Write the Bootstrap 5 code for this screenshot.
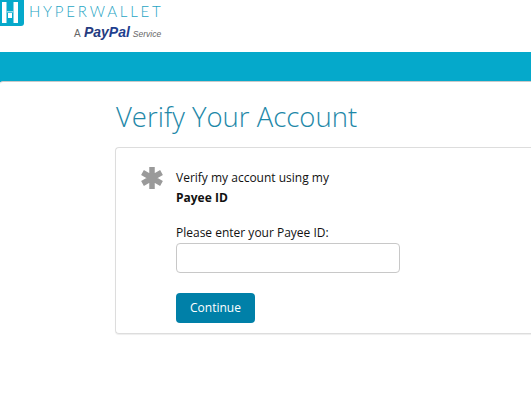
<!DOCTYPE html>
<html lang="en"><head><meta charset="utf-8"><title>Verify Your Account</title>
<link href="https://cdn.jsdelivr.net/npm/bootstrap@5.3.0/dist/css/bootstrap.min.css" rel="stylesheet">
<style>
html,body{height:414px;overflow:hidden}
body{font-family:"Open Sans",sans-serif;font-size:12px;color:#111;background:#fff}
.hw-head{height:52px}
.hw-mark{width:24px;height:26px;background:#05a9cb;border-radius:0 0 3px 0}
.hw-word{font-family:Lato,sans-serif;font-weight:300;font-size:15px;letter-spacing:2.800px;color:#1fa5c4;line-height:18px;margin-top:2px;margin-left:5px}
.hw-sub{font-family:"Liberation Sans",sans-serif;font-size:10px;color:#666;margin-left:50px;margin-top:5px;line-height:15px}
.hw-pp{font-weight:700;font-style:italic;font-size:14px;color:#253b80;margin:0 3px 0 1px}
.hw-pp b{color:#1f3f8f}
.hw-svc{font-style:italic;font-size:8.500px}
.hw-bar{height:30px;background:#05a9cb}
.hw-panel{border-top:1px solid #c9c9c9;border-radius:3px 0 0 0;padding:0 0 0 115px;margin-top:-1px;background:#fff;height:320px}
.hw-title{font-family:"Open Sans",sans-serif;font-weight:300;font-size:27.500px;color:#1e88a8;line-height:36px;margin:17px 0 12px 1px}
.hw-box{width:440px;height:187px;border:1px solid #ddd;border-right:0;border-radius:4px 0 0 4px;box-shadow:0 1px 1px #eee;padding:20px 0 0 25px}
.hw-star{width:22px;height:22px;margin-right:13px;margin-top:-1px}
.hw-line{line-height:20px}
.hw-lbl{margin:0;line-height:20px;margin-top:15px}
.hw-input{width:224px;height:30px;border:1px solid #c8c8c8;border-radius:4px;margin-top:0;padding:0 8px}
.hw-btn{width:79px;height:30px;background:#0080a8;color:#fff;border:0;border-radius:4px;font-size:12px;margin-top:20px;padding:0}
.hw-btn:hover{background:#0080a8;color:#fff}
</style></head><body>
<header class="hw-head">
<div class="d-flex"><div class="hw-mark flex-shrink-0"><svg class="d-block" width="24" height="26" viewBox="0 0 24 26"><path d="M2 2h4.500v21H2zM13.500 2H18v21h-4.500zM8 13h4v5H8z" fill="#fff"/><path d="M6.500 11h7v1.500h-7z" fill="#8fd8e8"/></svg></div>
<div><div class="hw-word">HYPERWALLET</div><div class="hw-sub">A <span class="hw-pp">Pay<b class="fw-bold">Pal</b></span><span class="hw-svc">Service</span></div></div></div>
</header>
<div class="hw-bar"></div>
<main class="hw-panel">
<h1 class="hw-title">Verify Your Account</h1>
<div class="hw-box d-flex">
<svg class="hw-star flex-shrink-0" viewBox="0 0 22 22"><g stroke="#9a9a9a" stroke-width="5.500"><path d="M11 0v22M1.500 5.500l19 11M20.500 5.500l-19 11"/></g></svg>
<form>
<div class="hw-line">Verify my account using my</div>
<div class="hw-line fw-bold">Payee ID</div>
<label class="hw-lbl d-block" for="pid">Please enter your Payee ID:</label>
<input id="pid" class="hw-input form-control" type="text">
<button type="button" class="btn hw-btn">Continue</button>
</form>
</div>
</main>
<script src="https://cdn.jsdelivr.net/npm/bootstrap@5.3.0/dist/js/bootstrap.bundle.min.js"></script>
</body></html>
